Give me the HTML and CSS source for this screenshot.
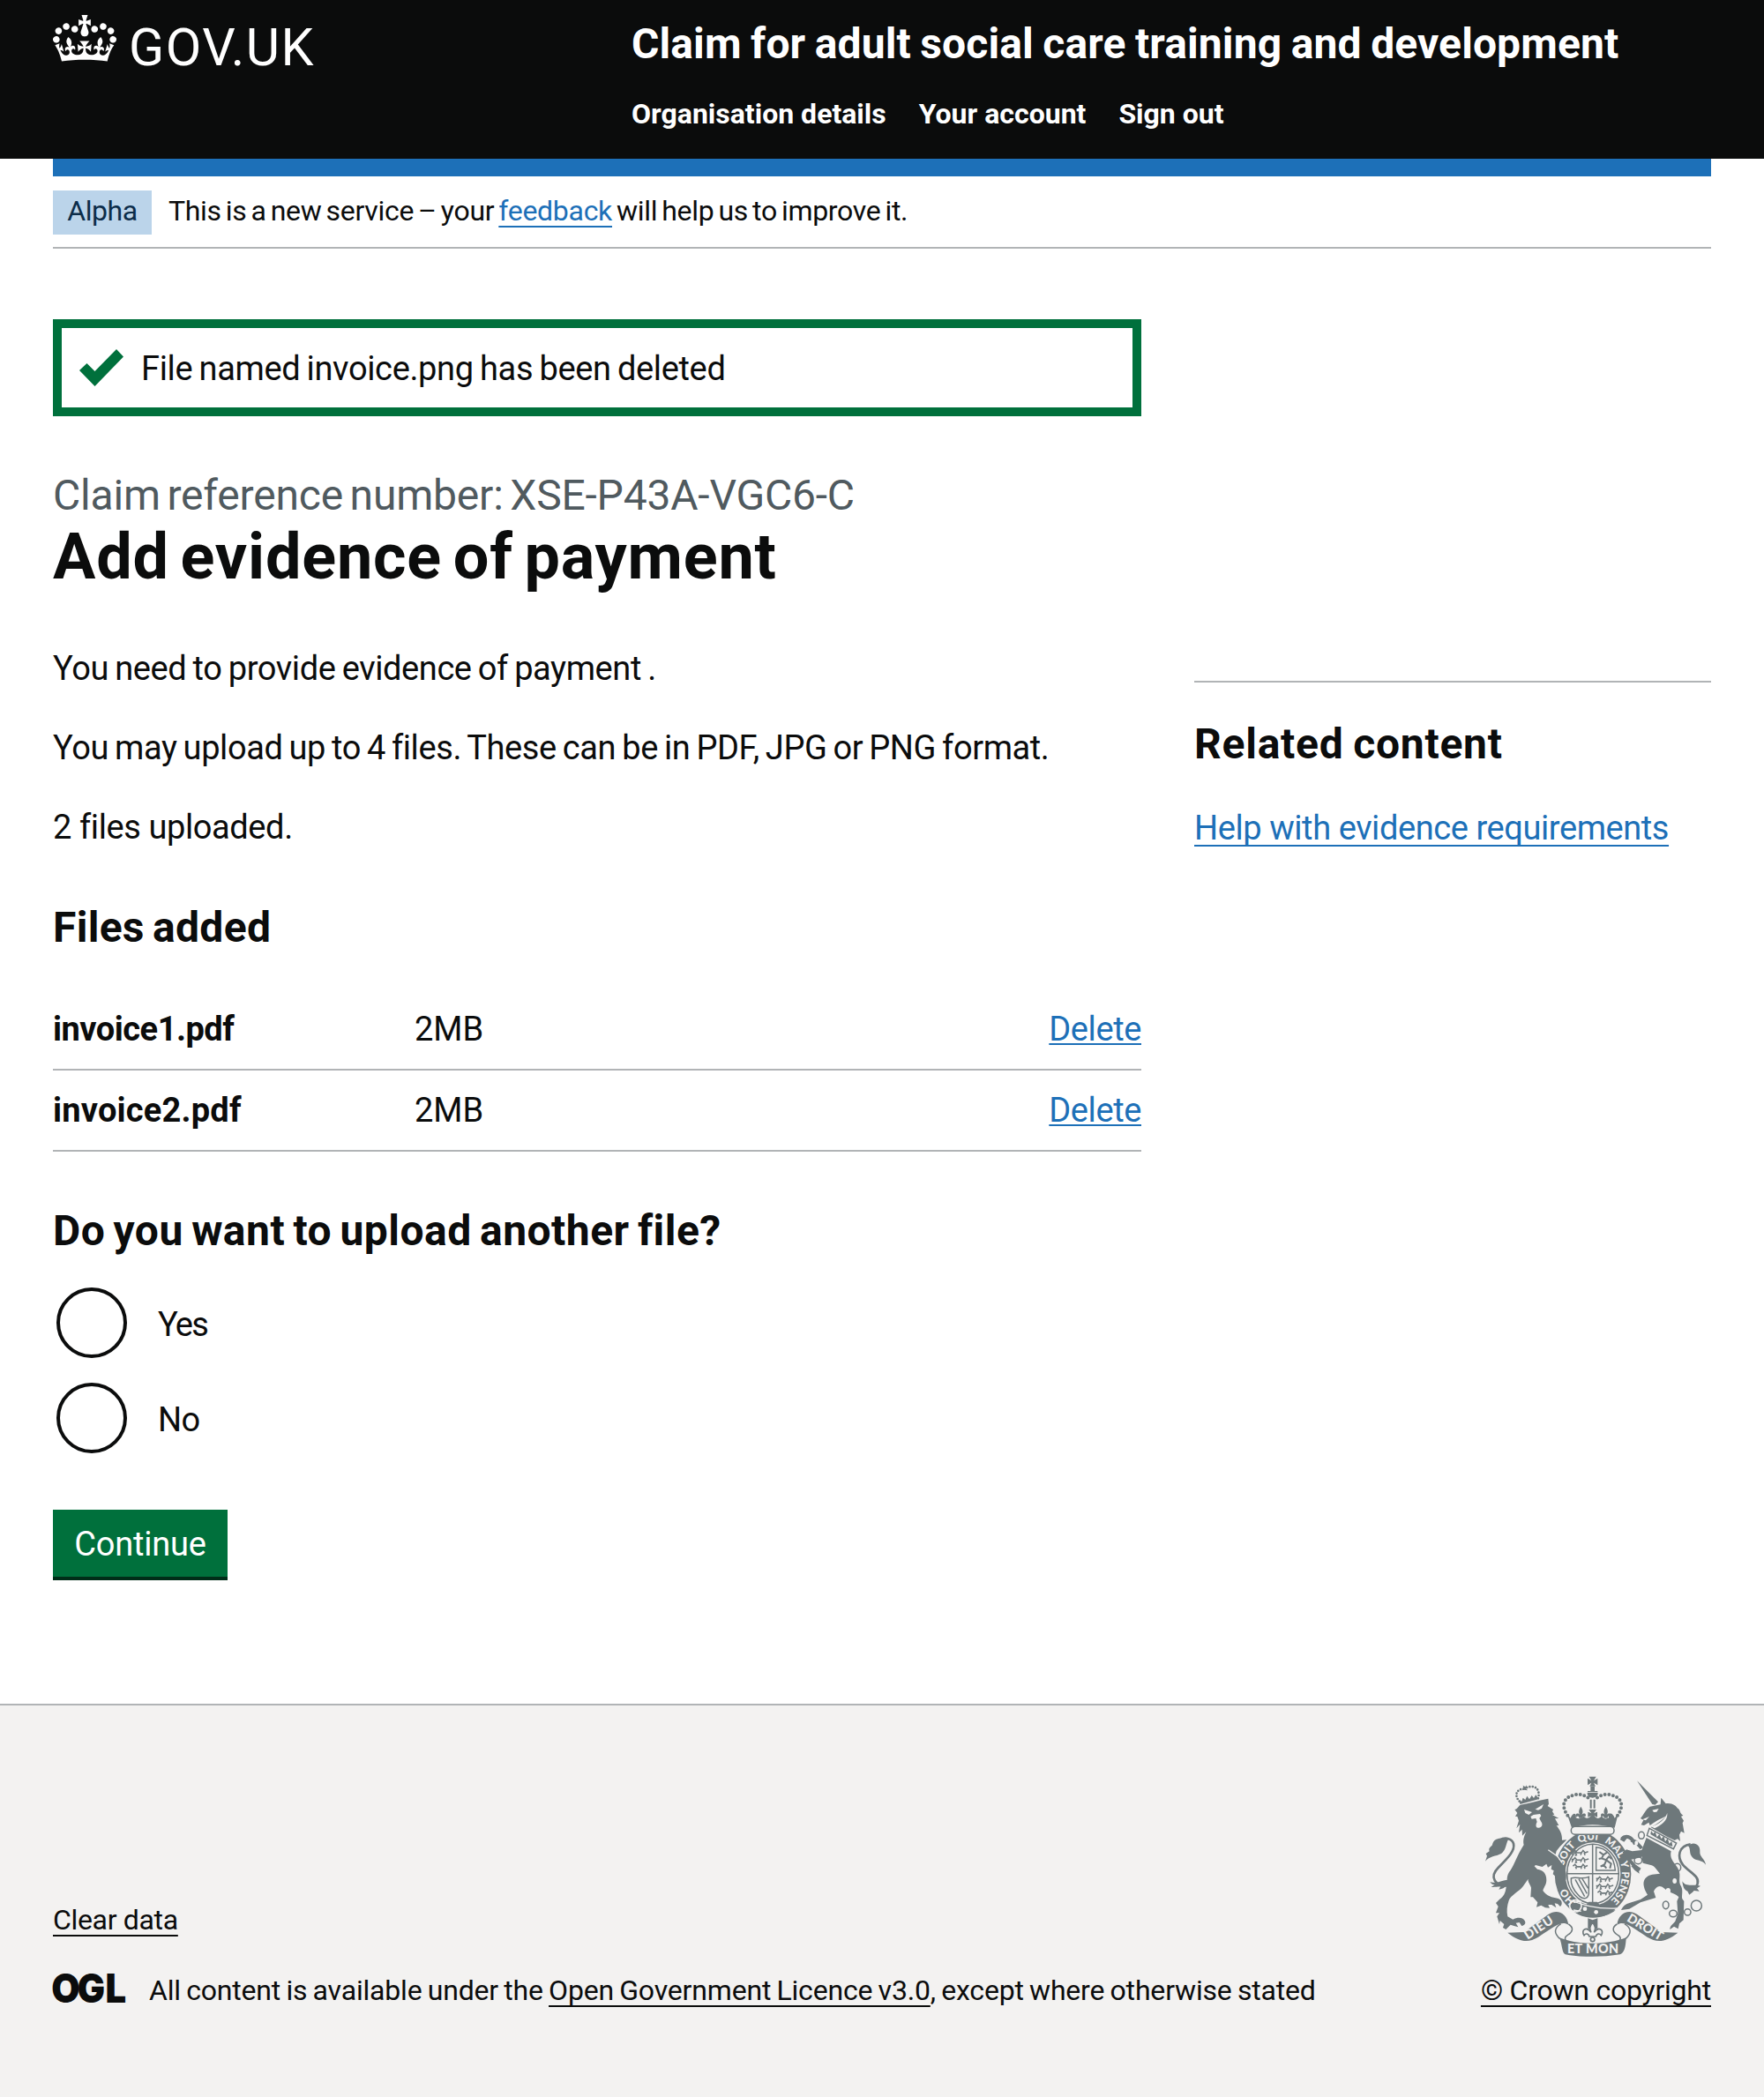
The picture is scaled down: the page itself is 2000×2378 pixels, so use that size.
FILE: index.html
```html
<!DOCTYPE html>
<html lang="en">
<head>
<meta charset="utf-8">
<title>Add evidence of payment</title>
<link rel="stylesheet" href="styles.css">
</head>
<body>
<header class="header">
  <div class="header-logo">
    <svg class="crown" viewBox="0 0 132 97" aria-hidden="true"><path d="M25 30.2c3.5 1.5 7.7-.2 9.1-3.7 1.5-3.6-.2-7.8-3.9-9.2-3.6-1.4-7.6.3-9.1 3.9-1.4 3.5.3 7.5 3.9 9zM9 39.5c3.6 1.5 7.8-.2 9.2-3.7 1.5-3.6-.2-7.8-3.9-9.1-3.6-1.5-7.6.2-9.1 3.8-1.4 3.5.3 7.5 3.8 9zM4.4 57.2c3.5 1.5 7.7-.2 9.1-3.8 1.5-3.6-.2-7.7-3.9-9.1-3.5-1.5-7.6.3-9.1 3.8-1.4 3.5.3 7.6 3.9 9.1zm38.3-21.4c3.5 1.5 7.7-.2 9.1-3.8 1.5-3.6-.2-7.7-3.9-9.1-3.6-1.5-7.6.3-9.1 3.8-1.3 3.6.4 7.7 3.9 9.1zm64.4-5.6c-3.6 1.5-7.8-.2-9.1-3.7-1.5-3.6.2-7.8 3.8-9.2 3.6-1.4 7.7.3 9.2 3.9 1.3 3.5-.4 7.5-3.9 9zm15.9 9.3c-3.6 1.5-7.7-.2-9.1-3.7-1.5-3.6.2-7.8 3.7-9.1 3.6-1.5 7.7.2 9.2 3.8 1.5 3.5-.3 7.5-3.8 9zm4.7 17.7c-3.6 1.5-7.8-.2-9.2-3.8-1.5-3.6.2-7.7 3.9-9.1 3.6-1.5 7.7.3 9.2 3.8 1.3 3.5-.4 7.6-3.9 9.1zM89.3 35.8c-3.6 1.5-7.8-.2-9.2-3.8-1.4-3.6.2-7.7 3.9-9.1 3.6-1.5 7.7.3 9.2 3.8 1.4 3.6-.3 7.7-3.9 9.1zM69.7 17.7l8.9 4.7V9.3l-8.9 2.8c-.2-.3-.5-.6-.9-.9L72.4 0H59.6l3.5 11.2c-.3.3-.6.5-.9.9l-8.8-2.8v13.1l8.8-4.7c.3.3.6.7.9.9l-5 15.4v.1c-.2.8-.4 1.6-.4 2.4 0 4.1 3.1 7.5 7 8.1h.2c.3 0 .7.1 1 .1.4 0 .7 0 1-.1h.2c4-.6 7.1-4.1 7.1-8.1 0-.8-.1-1.7-.4-2.4V34l-5.1-15.4c.4-.2.7-.6 1-.9zM66 92.8c16.9 0 32.8 1.1 47.1 3.2 4-16.9 8.9-26.7 14-33.5l-9.6-3.4c1 4.9 1.1 7.2 0 10.2-1.5-1.4-3-4.3-4.2-8.7L108.6 76c2.8-2 5-3.2 7.5-3.3-4.4 9.4-10 11.9-13.6 11.2-4.3-.8-6.3-4.6-5.6-7.9 1-4.7 5.7-5.9 8-.5 4.3-8.7-3-11.4-7.6-8.8 7.1-7.2 7.9-13.5 2.1-21.1-8 6.1-8.1 12.3-4.5 20.8-4.7-5.4-12.1-2.5-9.5 6.2 3.4-5.2 7.9-2 7.2 3.1-.6 4.3-6.4 7.8-13.5 7.2-10.3-.9-10.9-8-11.2-13.8 2.5-.5 7.1 1.8 11 7.3L80.2 60c-4.1 4.4-8 5.3-12.3 5.4 1.4-4.4 8-11.6 8-11.6H55.5s6.4 7.2 7.9 11.6c-4.2-.1-8-1-12.3-5.4l1.4 16.4c3.9-5.5 8.5-7.7 10.9-7.3-.3 5.8-.9 12.8-11.1 13.8-7.2.6-12.9-2.9-13.5-7.2-.7-5 3.8-8.3 7.1-3.1 2.7-8.7-4.6-11.6-9.4-6.2 3.7-8.5 3.6-14.7-4.6-20.8-5.8 7.6-5 13.9 2.2 21.1-4.7-2.6-11.9.1-7.7 8.8 2.3-5.5 7.1-4.2 8.1.5.7 3.3-1.3 7.1-5.7 7.9-3.5.7-9-1.8-13.5-11.2 2.5.1 4.7 1.3 7.5 3.3l-4.7-15.4c-1.2 4.4-2.7 7.2-4.3 8.7-1.1-3-.9-5.3 0-10.2l-9.5 3.4c5 6.9 9.9 16.7 14 33.5 14.8-2.1 30.8-3.2 47.7-3.2z"/></svg>
    <span class="wordmark">GOV.UK</span>
  </div>
  <div class="header-content">
    <a class="service-name">Claim for adult social care training and development</a>
    <nav class="header-nav"><a>Organisation details</a><a class="nav-account">Your account</a><a>Sign out</a></nav>
  </div>
</header>
<div class="container">
  <div class="blue-bar"></div>
  <div class="phase-banner">
    <strong class="tag">Alpha</strong>
    <span class="phase-text">This is a new service – your <a class="link">feedback</a> will help us to improve it.</span>
  </div>
  <div class="columns">
    <main class="main">
      <div class="notification">
        <svg class="tick" viewBox="0 0 50 42" aria-hidden="true"><path d="M0 24L8.500 16L17.500 25L42 0L50 8.500L17.500 42Z"/></svg>
        <p class="notification-text">File named invoice.png has been deleted</p>
      </div>
      <div class="caption">Claim reference number: XSE-P43A-VGC6-C</div>
      <h1 class="title">Add evidence of payment</h1>
      <p class="body need">You need to provide evidence of payment .</p>
      <p class="body may">You may upload up to 4 files. These can be in PDF, JPG or PNG format.</p>
      <p class="body count">2 files uploaded.</p>
      <h2 class="heading files-heading">Files added</h2>
      <dl class="files">
        <div class="file-row"><dt>invoice1.pdf</dt><dd class="size">2MB</dd><dd><a class="link delete">Delete</a></dd></div>
        <div class="file-row"><dt class="wide">invoice2.pdf</dt><dd class="size">2MB</dd><dd><a class="link delete">Delete</a></dd></div>
      </dl>
      <h2 class="heading question">Do you want to upload another file?</h2>
      <div class="radios">
        <label class="radio"><span class="circle"></span><span class="radio-text yes">Yes</span></label>
        <label class="radio"><span class="circle"></span><span class="radio-text">No</span></label>
      </div>
      <button class="button" type="button">Continue</button>
    </main>
    <aside class="related">
      <h2 class="heading related-heading">Related content</h2>
      <a class="link help">Help with evidence requirements</a>
    </aside>
  </div>
</div>
<footer class="footer">
  <div class="footer-meta">
    <a class="footer-link clear">Clear data</a>
    <div class="licence">
      <svg class="ogl" viewBox="0 0 82 34" role="img" aria-label="OGL"><text class="ogl-text" y="33.200" x="-1.800 29.500 64" transform="scale(.93 1)">OGL</text></svg>
      <span class="licence-text">All content is available under the <a class="footer-link">Open Government Licence v3.0</a>, except where otherwise stated</span>
    </div>
  </div>
  <div class="copyright">
    <svg class="arms" viewBox="72 70 750 615" aria-hidden="true">
      <defs>
        <path id="motto" d="M437 517A100 115 0 0 1 437 287A100 115 0 0 1 437 517"/>
        <g id="fleur"><path d="M0-24C-8-12-8-4-3 4C-12-6-22 2-14 12C-12 6-6 8-6 15H6C6 8 12 6 14 12C22 2 12-6 3 4C8-4 8-12 0-24Z"/></g>
        <g id="half-ribbon"><path d="M148 603L204 601L286 541C318 520 350 538 355 576C330 562 312 580 252 618C218 638 190 636 148 603Z"/><path class="line" d="M355 574C374 586 370 600 352 611C338 619 344 630 350 632M329 573C306 588 304 604 326 624"/></g>
        <g id="lions"><path class="line lion-line" d="M-36-22H-28L-22-28L-14-20H4L10-28L18-20L30-24M-30-22L-34-12M-20-20L-16-12L-22-10M4-20L0-12M14-20L18-11M-36 4H-28L-22-2L-14 6H4L10-2L18 6L32 2M-30 4L-34 14M-20 6L-16 14L-22 16M4 6L0 14M14 6L18 15M-30 28L-22 22L-14 30H4L10 22L18 30L28 26M-20 30L-16 38M4 30L2 38M14 30L18 37"/></g>
      </defs>
      <!-- garter and shield -->
      <ellipse cx="438" cy="403" rx="130" ry="149"/>
      <ellipse class="paper" cx="438" cy="403" rx="94" ry="107"/>
      <ellipse class="line" cx="438" cy="403" rx="88" ry="101"/>
      <path class="line" d="M437 302V504M350 402H526"/>
      <use href="#lions" transform="translate(396 350) scale(.86 .95)"/>
      <use href="#lions" transform="translate(480 440) scale(.86 .95)"/>
      <path class="line" d="M449 391V312C484 314 510 345 514 391Z"/>
      <path class="line beast" d="M460 328L474 338L468 350L484 356L478 370L464 378M474 338L486 330M484 356L500 368L496 384M468 350L458 352M484 354L492 344L502 352M474 372L484 384"/>
      <path class="line" d="M364 418C380 410 400 424 424 413V470C420 492 402 490 388 474C372 458 362 440 364 418ZM378 422L410 480M390 420L418 470M402 420L422 452"/>
      <path d="M424 498H452L464 512H412Z"/>
      <g class="motto"><text><textPath href="#motto" startOffset="9.500%">HO</textPath></text><text><textPath href="#motto" startOffset="29%">SOIT</textPath></text><text><textPath href="#motto" startOffset="43%">QUI</textPath></text><text><textPath href="#motto" startOffset="56%">MAL</textPath></text><text><textPath href="#motto" startOffset="69%">Y</textPath></text><text><textPath href="#motto" startOffset="74%">PENSE</textPath></text></g>
      <path class="paper-line" d="M350 488C400 508 450 524 520 520"/>
      <path d="M372 500C420 518 470 532 515 527C480 555 420 560 372 530Z"/>
      <circle class="buckle" cx="379" cy="512" r="20"/><path class="paper-line" d="M372 500L398 496M372 526L398 530"/>
      <circle class="paper" cx="411" cy="522" r="7"/><circle class="paper" cx="449" cy="533" r="7"/>
      <!-- royal crown -->
      <path class="paper" d="M358 222H516L508 268H366Z"/>
      <path d="M350 198L362 213C370 192 384 196 380 212C392 218 404 212 406 206C416 218 426 214 430 206H444C450 216 458 218 468 206C472 216 484 218 492 212C490 194 504 192 512 213L524 198L512 246C460 232 414 232 366 246Z"/>
      <rect class="line" x="364" y="242" width="146" height="27" rx="13"/>
      <path class="dots" d="M352 204C330 174 334 140 382 133C402 131 414 138 425 146M522 204C544 174 540 140 492 133C472 131 460 138 449 146"/>
      <path d="M419 127H455C456 150 418 150 419 127ZM430 106H444V121H454V125H420V121H430ZM425 72H449L441 86L454 78V101L441 93L447 105H427L433 93L420 101V78L433 86ZM428 150H434V180H428ZM440 150H446V180H440ZM424 184H450L441 197L453 192V210L441 204L446 214H428L433 204L421 210V192L433 197Z"/>
      <use href="#fleur" x="397" y="198"/><use href="#fleur" x="482" y="198"/>
      <!-- lion -->
      <path class="dots small" d="M188 156C168 134 180 114 204 113M252 146C260 114 240 98 212 110"/>
      <path d="M188 151L196 157L200 144L208 151L214 138L222 149L230 136L237 145L244 134L252 146L248 150L190 166ZM200 102L208 107L213 101L211 113L216 119L204 117L197 119L202 111Z"/>
      <path d="M172 184C182 183 184 172 192 168C222 162 250 154 286 147L288 165L284 172L303 184L300 191L307 201L300 202L322 214L309 215L322 238L314 239C326 254 334 268 333 288L349 287L326 310L314 325L311 337L330 364C346 384 350 404 346 424L338 420L333 430L327 420L315 427L312 412L302 404L305 392L296 387L298 373L285 381L280 369L266 379L243 373L239 377L249 387C268 390 280 400 280 424C280 440 272 446 268 460C280 478 300 484 318 486C334 490 336 506 327 514L318 505L308 503L313 518L298 508L286 508L291 519L276 518L262 510L246 516L250 500L234 482L226 482L228 450C224 436 216 430 218 420L200 446C186 464 158 476 152 494C146 512 144 530 148 548L166 558C182 550 198 550 206 562C212 572 204 578 196 580L188 568L176 570L184 584L170 580L158 576L142 592L132 586L136 574L122 562L120 574L112 548L120 536L108 536L116 514L108 502L120 490C140 474 140 464 144 444C148 424 142 408 158 390C172 370 180 340 203 304C200 292 202 278 211 260L198 273L197 252L186 263L190 234L178 248L186 222L181 208L174 207L181 196Z"/>
      <path class="paper" d="M204 184L231 193L220 202L208 196ZM242 183L270 166L264 180L252 186ZM226 208L236 202L258 199L262 205L256 214L261 224C270 236 264 246 254 246C244 248 242 238 248 226L244 214L230 216Z"/>
      <path class="paper-line" d="M286 321L318 344L334 366"/>
      <path class="line tail" d="M148 443C106 446 84 414 116 382C150 348 174 324 168 300C164 284 142 276 120 288"/>
      <path d="M150 286C120 278 100 282 96 304C92 312 82 312 86 326L74 334L78 342L72 360C86 342 108 344 126 334C142 324 142 302 150 286ZM150 424C120 424 118 438 88 430C94 438 98 440 104 440L92 448C110 446 114 448 124 446L118 456C134 454 142 446 152 436Z"/>
      <!-- unicorn -->
      <path d="M588 86L660 158L650 168L640 166Z"/>
      <path d="M600 214C612 200 618 182 632 174L668 167L670 144L686 164C706 160 724 174 724 178C738 186 730 194 745 204L738 208L747 222L743 230L749 264L738 258L732 270L735 292L726 284L716 289L690 276L634 244C648 240 672 222 688 206C672 214 650 224 632 238L628 228L612 238L602 236L610 220Z"/>
      <path class="paper" d="M640 186L662 181L655 192L645 193ZM606 218L630 208L618 221ZM636 242C662 236 686 214 691 196C694 222 668 238 648 248Z"/>
      <path class="line" d="M630 248L722 298L712 318L622 272Z"/>
      <path d="M634 268L636 256L643 266L650 260L656 278L664 268L671 284L679 274L684 293L692 282L698 300L706 292L709 309L700 308Z"/>
      <path d="M620 280L704 326C698 350 712 362 726 382C740 406 728 420 735 440C748 458 738 478 742 488L748 496L746 560L732 572L728 590L714 582L700 592C700 578 712 572 718 564L727 538L724 496L730 482C722 470 696 468 680 452C664 438 652 448 645 462L652 484L600 500L562 522L534 526C542 510 550 506 562 502L600 490L624 474C600 434 610 412 640 405L666 402C656 392 652 380 638 374L608 366L604 344L558 350L542 330L552 320L572 326L604 322Z"/>
      <path class="line leg" d="M536 284C552 268 570 278 582 302M604 316L584 294L568 288M544 326L562 356L578 374L596 392M562 350L602 340"/>
      <path d="M568 376L586 374L602 384L594 390L596 402L580 390ZM530 286L540 274L560 272L554 282L544 294Z"/>
      <path class="line tail" d="M770 302C728 308 724 346 744 372C764 396 802 410 794 436C790 452 776 460 758 450"/>
      <path d="M762 308C780 290 804 304 802 326C800 346 818 350 822 372C808 352 790 362 776 346C764 334 772 318 762 308ZM742 428C754 450 780 436 804 444L792 452L800 462L782 460C776 468 768 472 766 474L760 462C748 458 744 446 742 428Z"/>
      <g class="chain"><ellipse cx="603" cy="272" rx="10" ry="12"/><ellipse cx="592" cy="357" rx="13" ry="12"/><ellipse cx="725" cy="381" rx="12" ry="13"/><ellipse cx="686" cy="509" rx="10" ry="13"/><ellipse cx="711" cy="538" rx="13" ry="11"/><ellipse cx="760" cy="533" rx="11" ry="11"/><circle cx="790" cy="511" r="18"/></g>
      <ellipse class="paper" cx="716" cy="427" rx="7" ry="9"/><ellipse class="paper" cx="694" cy="461" rx="8" ry="10"/><ellipse class="paper" cx="586" cy="298" rx="6" ry="8"/>
      <!-- ribbon -->
      <use href="#half-ribbon"/><use href="#half-ribbon" transform="translate(875 0) scale(-1 1)"/>
      <path d="M324 620C390 646 484 646 551 620C550 652 544 674 530 677C470 687 400 687 344 677C332 672 334 644 324 620Z"/>
      <path d="M421 554L437 560L454 554V590H421Z"/>
      <path class="fleur-outline" d="M437 568C426 582 426 590 432 602C416 580 396 594 408 612C414 604 424 606 426 616H448C450 606 460 604 466 612C478 594 458 580 442 602C448 590 448 582 437 568Z"/>
      <circle class="fleur-outline" cx="437" cy="626" r="7"/>
      <g class="scroll-text"><text x="438" y="673" text-anchor="middle" textLength="174">ET MON</text><text transform="translate(216 627) rotate(-33)" textLength="108">DIEU</text><text transform="translate(551 562) rotate(31)" textLength="134">DROIT</text></g>
    </svg>
    <a class="footer-link crown-copyright">© Crown copyright</a>
  </div>
</footer>
</body>
</html>
```
FILE: styles.css
```css
* { box-sizing: border-box; }
body { margin: 0; background: #fff; color: #0b0c0c; font: 38px/50px Roboto, "Liberation Sans", sans-serif; }
h1, h2, p, dl, dd { margin: 0; }
a { white-space: nowrap; }

.header { display: flex; height: 180px; padding: 0 60px; background: #0b0c0c; color: #fff; }
.header-logo { display: flex; align-items: flex-start; width: 656px; padding-top: 17px; }
.crown { width: 72px; height: 53px; fill: #fff; }
.wordmark { margin: 7px 0 0 14px; font-size: 59px; line-height: 60px; letter-spacing: 1.5px; }
.header-content { display: flex; flex-direction: column; gap: 29px; padding-top: 20px; }
.service-name { font-size: 48px; font-weight: 700; line-height: 60px; letter-spacing: 0.1px; word-spacing: -1.5px; }
.header-nav { display: flex; gap: 37px; font-size: 32px; font-weight: 700; line-height: 40px; }

.container { padding: 0 60px; }
.blue-bar { height: 20px; background: #1d70b8; }
.phase-banner { display: flex; align-items: flex-start; gap: 19px; height: 82px; padding-top: 16px; border-bottom: 2px solid #b1b4b6; font-size: 32px; }
.tag { width: 112px; height: 50px; background: #bbd4ea; color: #0c2d4a; font-weight: 400; line-height: 46px; text-align: center; letter-spacing: -0.4px; }
.phase-text { padding-top: 3px; line-height: 40px; letter-spacing: -0.3px; word-spacing: -2.6px; }
.link { color: #1d70b8; text-decoration: underline 2px; text-underline-offset: 6px; text-decoration-skip-ink: none; }

.columns { display: grid; grid-template-columns: 1234px 586px; gap: 60px; padding-top: 80px; }
.notification { display: flex; align-items: flex-start; gap: 20px; height: 110px; padding: 20px; border: 10px solid #00703c; }
.tick { width: 50px; height: 42px; margin-top: 4px; fill: #00703c; }
.notification-text { padding-top: 1px; letter-spacing: -0.35px; word-spacing: -1.8px; }
.caption { margin-top: 60px; color: #505a5f; font-size: 48px; line-height: 60px; letter-spacing: -0.2px; word-spacing: -4px; }
.title { margin-bottom: 61px; font-size: 72px; line-height: 80px; letter-spacing: 0.8px; word-spacing: -6px; }
.body { margin-bottom: 40px; }
.need { letter-spacing: -0.4px; word-spacing: -1.8px; }
.may { letter-spacing: -0.4px; word-spacing: -2px; }
.count { letter-spacing: -0.4px; }
.heading { font-size: 48px; line-height: 60px; }
.files-heading { margin: 59px 0 40px; letter-spacing: 0.3px; word-spacing: -3px; }
.file-row { display: grid; grid-template-columns: 410px 1fr auto; height: 92px; padding-top: 20px; border-bottom: 2px solid #b1b4b6; }
.file-row dt { font-weight: 700; letter-spacing: -0.5px; }
.file-row .wide { letter-spacing: 0.2px; }
.delete { letter-spacing: -0.4px; text-underline-offset: 3px; }
.question { margin: 60px 0 34px; letter-spacing: 0.46px; word-spacing: -3px; }
.radios { display: flex; flex-direction: column; gap: 28px; padding-left: 4px; }
.radio { display: flex; align-items: center; gap: 35px; height: 80px; letter-spacing: -0.5px; }
.radio-text { padding-top: 3px; }
.yes { letter-spacing: -1.8px; }
.circle { width: 80px; height: 80px; border: 4px solid #0b0c0c; border-radius: 50%; }
.button { display: block; width: 198px; height: 76px; margin-top: 64px; padding: 14px 0 12px; border: 0; background: #00703c; box-shadow: 0 4px 0 #002d18; color: #fff; font: inherit; letter-spacing: -0.2px; }

.related { align-self: start; margin-top: 410px; padding-top: 40px; border-top: 2px solid #b1b4b6; }
.related-heading { margin-bottom: 40px; letter-spacing: 0.75px; word-spacing: -2px; }
.help { letter-spacing: -0.42px; }

.footer { display: flex; align-items: flex-end; justify-content: space-between; height: 446px; margin-top: 144px; padding: 0 60px 101px; border-top: 2px solid #b1b4b6; background: #f3f2f1; font-size: 32px; line-height: 40px; }
.footer-meta { display: flex; flex-direction: column; align-items: flex-start; gap: 40px; }
.footer-link { text-decoration: underline 2px; text-underline-offset: 6px; text-decoration-skip-ink: none; }
.clear { letter-spacing: -0.33px; }
.licence { display: flex; align-items: flex-start; gap: 27px; letter-spacing: -0.18px; word-spacing: -1.5px; }
.ogl { width: 82px; height: 34px; margin-top: 1px; overflow: visible; fill: #0b0c0c; }
.ogl-text { font: 900 45px Inter, sans-serif; letter-spacing: 0; }
.copyright { display: flex; flex-direction: column; align-items: center; gap: 19px; }
.crown-copyright { letter-spacing: -0.23px; }

.arms { width: 250px; height: 205px; margin-bottom: -1px; fill: #6e787b; }
.arms .paper { fill: #f3f2f1; }
.arms .line { fill: none; stroke: #6e787b; stroke-width: 4.5; }
.arms .lion-line { stroke-width: 5; }
.arms .beast { stroke-width: 6; }
.arms .tail { stroke-width: 8; }
.arms .leg { stroke-width: 12; }
.arms .paper-line { fill: none; stroke: #f3f2f1; stroke-width: 4; }
.arms .buckle { fill: none; stroke: #f3f2f1; stroke-width: 5; }
.arms .dots { fill: none; stroke: #6e787b; stroke-width: 12; stroke-linecap: round; stroke-dasharray: 0 14; }
.arms .small { stroke-width: 8; stroke-dasharray: 0 10; }
.arms .chain { fill: none; stroke: #6e787b; stroke-width: 4.5; }
.arms .fleur-outline { fill: #f3f2f1; stroke: #6e787b; stroke-width: 5; }
.arms .motto { fill: #f3f2f1; font: 900 35px Lato, sans-serif; }
.arms .scroll-text { fill: #f3f2f1; font: 900 43px Lato, sans-serif; }
```
